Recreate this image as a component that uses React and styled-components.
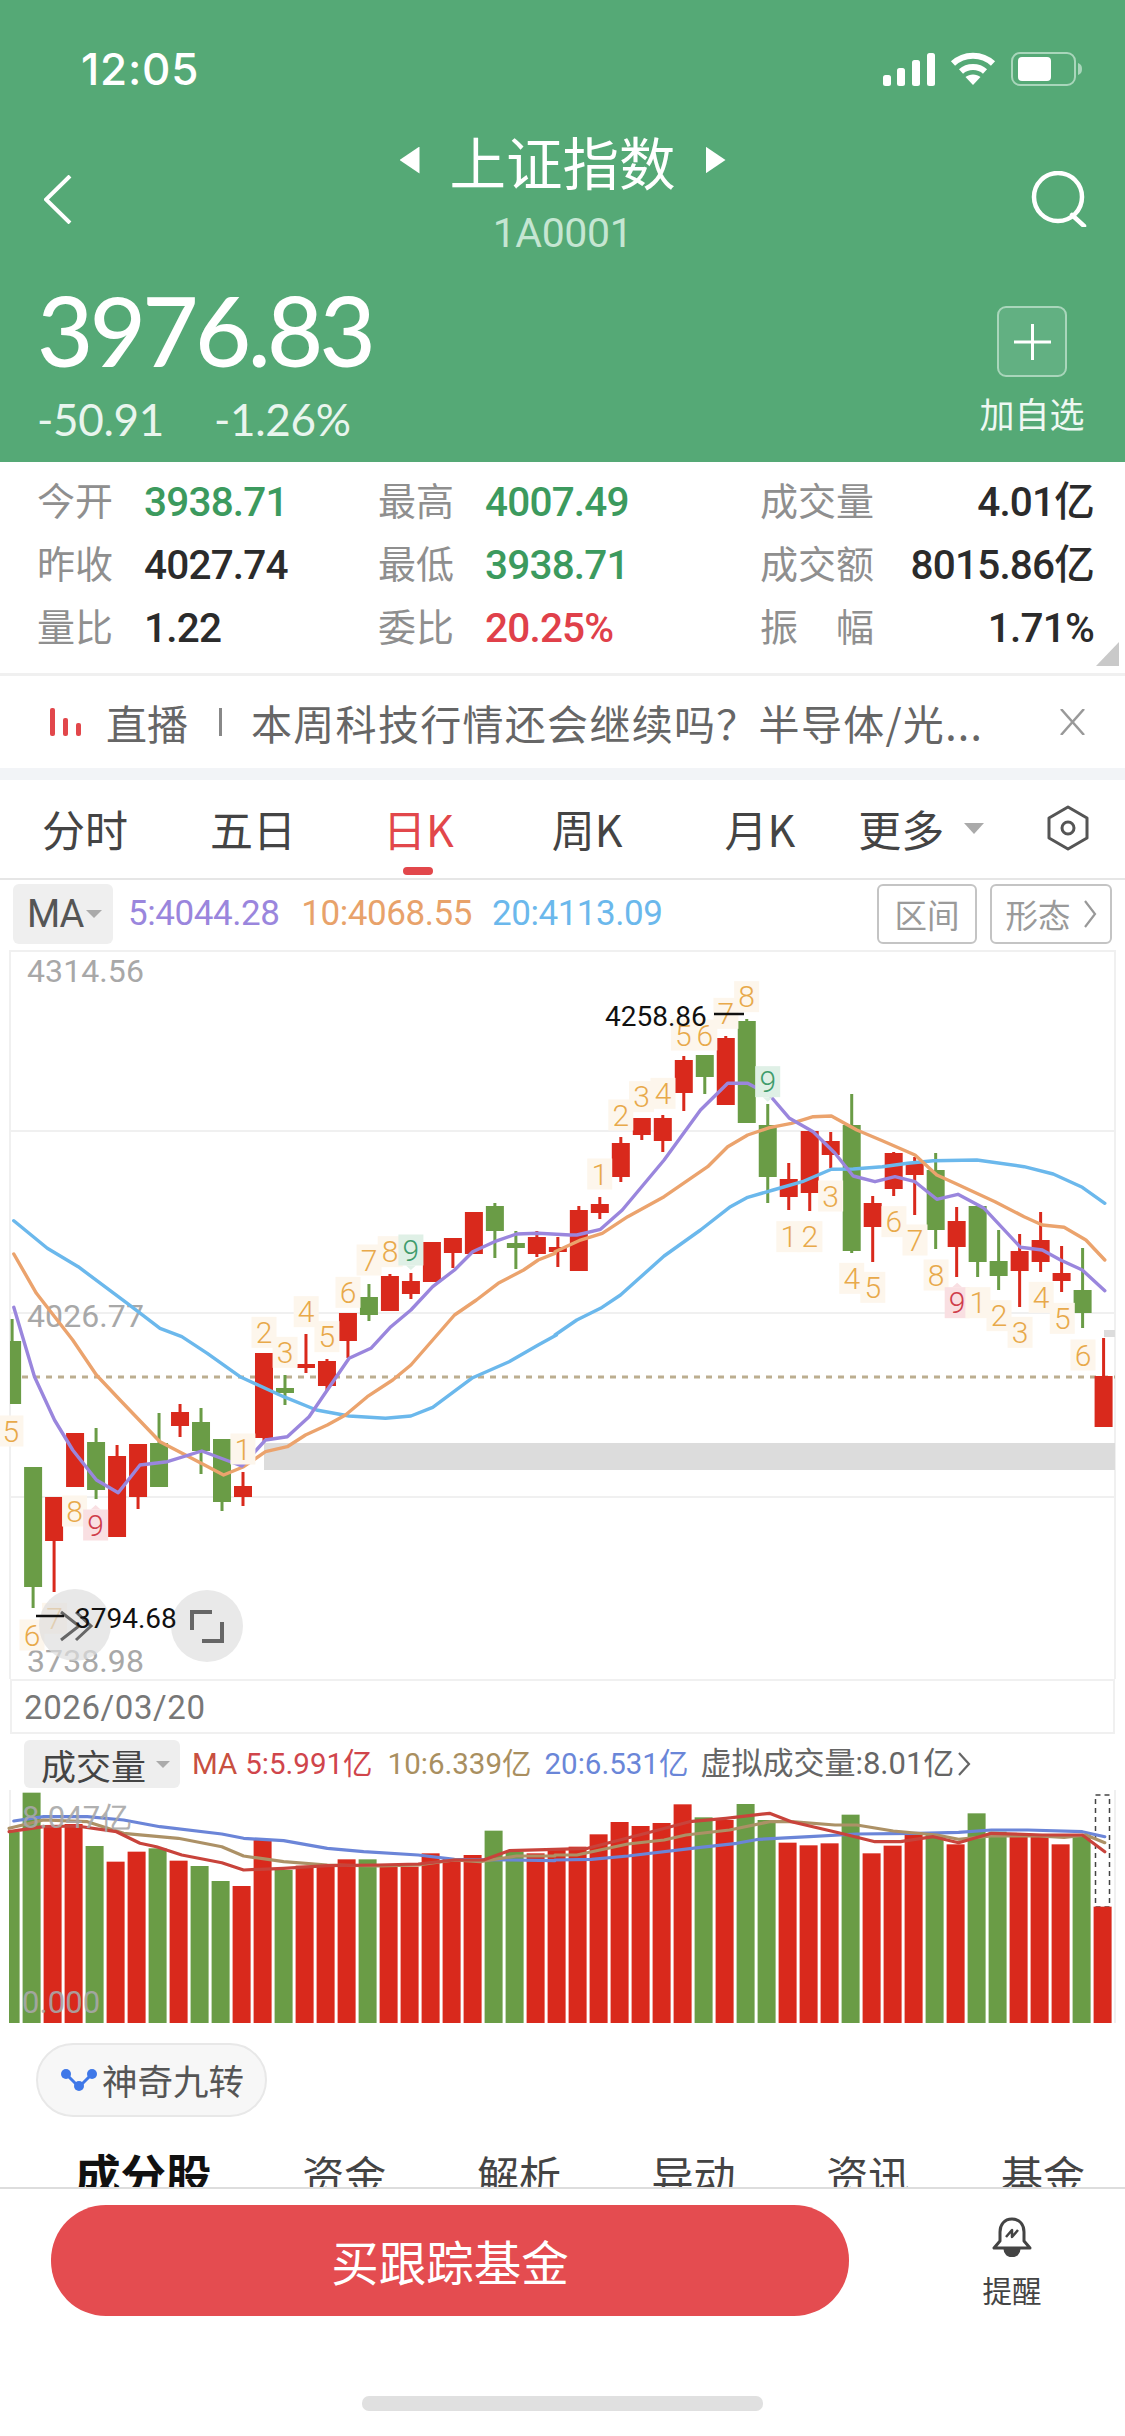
import React from "react";
import styled, { createGlobalStyle } from "styled-components";

const CJK = '"Noto Sans CJK SC", "Noto Sans", sans-serif';
const NUM = 'Roboto, "Noto Sans CJK SC", sans-serif';

const Global = createGlobalStyle`
  html, body { margin: 0; padding: 0; background: #fff; }
  #root { width: 1125px; }
  * { box-sizing: border-box; }
`;

const Page = styled.div`
  width: 1125px;
  height: 2436px;
  overflow: hidden;
  font-family: ${CJK};
  background: #fff;
  display: flex;
  flex-direction: column;
`;

/* header */
const Header = styled.header`
  height: 462px;
  flex: none;
  background: #55a976;
  color: #fff;
  padding-top: 47px;
`;
const StatusBar = styled.div`
  height: 44px;
  padding: 0 41px 0 81px;
  display: flex;
  align-items: center;
  justify-content: space-between;
`;
const StatusIcons = styled.div`
  display: flex;
  align-items: center;
  gap: 15px;
`;
const Clock = styled.span`
  font: 500 44px/44px Inter, sans-serif;
  letter-spacing: 0.8px;
`;
const NavRow = styled.div`
  margin-top: 37px;
  height: 142px;
  padding: 0 38px;
  display: grid;
  grid-template-columns: 1fr auto 1fr;
  align-items: center;
`;
const BackSlot = styled.div`
  display: flex;
  padding-left: 6px;
`;
const SearchSlot = styled.div`
  display: flex;
  justify-content: flex-end;
`;
const TitleBlock = styled.div`
  align-self: start;
  display: flex;
  flex-direction: column;
  align-items: center;
`;
const TitleLine = styled.div`
  display: flex;
  align-items: center;
  gap: 30px;
  height: 68px;
  margin-top: -2px;
`;
const Title = styled.h1`
  margin: 0;
  font: 400 56.5px/68px ${CJK};
`;
const Arrow = styled.i`
  display: block;
  width: 20px;
  height: 27px;
  background: #fff;
  clip-path: ${(p) => (p.$left ? "polygon(100% 0, 100% 100%, 0 50%)" : "polygon(0 0, 100% 50%, 0 100%)")};
`;
const Code = styled.div`
  margin-top: 14px;
  font: 400 41px/50px Roboto, sans-serif;
  color: #c5e6d2;
  letter-spacing: -0.4px;
`;
const PriceRow = styled.div`
  padding: 5px 40px 0 37px;
  display: flex;
  justify-content: space-between;
`;
const Price = styled.div`
  font: 500 97px/110px Lato, Roboto, sans-serif;
  letter-spacing: -3.6px;
`;
const Deltas = styled.div`
  margin-top: 12px;
  display: flex;
  gap: 50px;
  font: 400 44px/44px Lato, Roboto, sans-serif;
  letter-spacing: -0.3px;
  color: #e9f5ee;
`;
const Watch = styled.div`
  width: 106px;
  display: flex;
  flex-direction: column;
  align-items: center;
  padding-top: 31px;
`;
const AddBox = styled.div`
  width: 70px;
  height: 71px;
  border: 2px solid #a9d6bb;
  border-radius: 9px;
  background: #62b082;
  display: flex;
  align-items: center;
  justify-content: center;
`;
const WatchLabel = styled.div`
  margin-top: 14px;
  font: 400 35px/44px ${CJK};
  white-space: nowrap;
  color: #eef8f2;
`;

/* stats */
const Stats = styled.section`
  position: relative;
  height: 211px;
  flex: none;
  padding: 8px 31px 0 37px;
  display: grid;
  grid-template-columns: 341px 382px 1fr;
  grid-auto-rows: 63px;
`;
const Stat = styled.div`
  display: flex;
  align-items: center;
  justify-content: ${(p) => (p.$spread ? "space-between" : "flex-start")};
`;
const StatLabel = styled.span`
  width: ${(p) => (p.$wide ? "auto" : "107px")};
  padding-bottom: 5px;
  font: 400 38px/50px ${CJK};
  color: #8f8f8f;
  white-space: pre;
`;
const StatValue = styled.span`
  font: 500 40.5px/50px ${NUM};
  letter-spacing: -0.8px;
  color: ${(p) => p.$c || "#2b2b2b"};
  white-space: nowrap;
`;
const Corner = styled.i`
  position: absolute;
  right: 6px;
  bottom: 7px;
  width: 23px;
  height: 24px;
  background: #c9c9c9;
  clip-path: polygon(100% 0, 100% 100%, 0 100%);
`;

/* live */
const Live = styled.section`
  height: 95px;
  flex: none;
  border-top: 3px solid #f0f0f0;
  padding: 0 40px 0 50px;
  display: flex;
  align-items: center;
  font: 400 41px/50px ${CJK};
  color: #666;
`;
const LiveTag = styled.span`
  margin-left: 25px;
  width: 113px;
`;
const LiveBar = styled.i`
  display: block;
  width: 3px;
  height: 28px;
  margin-right: 29px;
  background: #888;
`;
const LiveText = styled.span`
  flex: 1;
  white-space: nowrap;
  letter-spacing: 1.3px;
`;
const Gap = styled.div`
  height: 12px;
  flex: none;
  background: #f2f4f7;
`;

/* period tabs */
const Periods = styled.nav`
  height: 100px;
  flex: none;
  border-bottom: 2px solid #e6e6e6;
  padding: 0 36px 2px 42px;
  display: flex;
  align-items: center;
`;
const Period = styled.span`
  position: relative;
  margin-left: ${(p) => p.$ml || 0}px;
  font: 400 43px/60px ${CJK};
  color: ${(p) => (p.$on ? "#e2474b" : "#444")};
  white-space: nowrap;
  &::after {
    content: ${(p) => (p.$on ? '""' : "none")};
    position: absolute;
    left: 20px;
    bottom: -17px;
    width: 30px;
    height: 8px;
    border-radius: 4px;
    background: #e2474b;
  }
`;
const Caret = styled.i`
  display: block;
  flex: none;
  margin-left: ${(p) => p.$ml}px;
  width: 0;
  height: 0;
  border-left: ${(p) => p.$s}px solid transparent;
  border-right: ${(p) => p.$s}px solid transparent;
  border-top: ${(p) => p.$s * 1.1}px solid #aaa;
`;
const Spacer = styled.div`
  flex: 1;
`;

/* indicator row */
const IndRow = styled.div`
  height: 70px;
  flex: none;
  padding: 4px 13px 6px 13px;
  display: flex;
  align-items: stretch;
`;
const MaBox = styled.div`
  width: 100px;
  background: #efefef;
  border-radius: 6px;
  padding-left: 14px;
  display: flex;
  align-items: center;
  font: 400 38px/1 ${NUM};
  color: #555;
  letter-spacing: -1px;
`;
const MaValue = styled.span`
  align-self: center;
  margin-left: ${(p) => p.$ml}px;
  font: 400 35px/50px ${NUM};
  letter-spacing: -0.45px;
  color: ${(p) => p.$c};
  white-space: nowrap;
`;
const Ghost = styled.div`
  width: ${(p) => p.$w}px;
  margin-left: ${(p) => p.$ml || 0}px;
  border: 2px solid #c4c4c4;
  border-radius: 6px;
  display: flex;
  align-items: center;
  justify-content: center;
  font: 400 32.5px/1 ${CJK};
  color: #9a9a9a;
`;

/* charts */
const ChartSvg = styled.svg`
  display: block;
  flex: none;
  width: 1125px;
`;
const AxisLabel = styled.text`
  font: 400 ${(p) => p.$s || 32}px Roboto, sans-serif;
  letter-spacing: 0.1px;
  fill: #a8a8a8;
`;
const Nine = styled.text`
  font: 300 30px Roboto, sans-serif;
  text-anchor: middle;
  dominant-baseline: central;
  fill: ${(p) => p.$c};
`;
const Extreme = styled.text`
  font: 400 28px Roboto, sans-serif;
  fill: #111;
`;
const DateRow = styled.div`
  height: 55px;
  flex: none;
  margin: 0 10px;
  padding: 2px 0 0 12px;
  border: 2px solid #f0f0f0;
  display: flex;
  align-items: center;
  font: 400 33px/1 Roboto, sans-serif;
  color: #777;
  letter-spacing: 0.6px;
`;
const VolHead = styled.div`
  height: 56px;
  flex: none;
  padding: 6px 0 2px 24px;
  display: flex;
  align-items: stretch;
`;
const VolBox = styled.div`
  width: 156px;
  border-radius: 6px;
  background: #eee;
  padding-left: 17px;
  display: flex;
  align-items: center;
  font: 400 35px/1 ${CJK};
  color: #444;
`;
const VolValue = styled.span`
  align-self: center;
  margin-left: ${(p) => p.$ml}px;
  font: 400 ${(p) => p.$s || 29.5}px/44px Roboto, "Noto Sans CJK SC", sans-serif;
  color: ${(p) => p.$c};
  white-space: nowrap;
`;
const VolMore = styled.span`
  display: flex;
  align-self: center;
  margin-left: 3px;
`;

/* bottom */
const ChipRow = styled.div`
  height: 87px;
  flex: none;
  padding: 13px 0 0 36px;
`;
const Chip = styled.div`
  width: 231px;
  height: 74px;
  border: 2px solid #e8e8e8;
  border-radius: 37px;
  background: #f7f7f7;
  padding-left: 23px;
  display: flex;
  align-items: center;
  gap: 5px;
  font: 400 35.5px/1 ${CJK};
  color: #555;
`;
const SubTabs = styled.nav`
  height: 70px;
  flex: none;
  overflow: hidden;
  padding: 29px 40px 0 75px;
  display: flex;
  align-items: flex-start;
  justify-content: space-between;
`;
const SubTab = styled.span`
  font: ${(p) => (p.$on ? "700 45.5px" : "400 42px")} / 56px ${CJK};
  color: ${(p) => (p.$on ? "#111" : "#444")};
  ${(p) => (p.$on ? "margin-top: -1px;" : "")}
`;
const Footer = styled.footer`
  flex: 1;
  border-top: 2px solid #ddd;
  background: #fff;
  display: flex;
  flex-direction: column;
`;
const FooterRow = styled.div`
  padding: 16px 0 0 51px;
  display: flex;
  align-items: flex-start;
`;
const BuyBtn = styled.button`
  width: 798px;
  height: 111px;
  border: 0;
  border-radius: 55px;
  background: #e44c50;
  color: #fff;
  font: 400 47.5px/1 ${CJK};
`;
const Remind = styled.div`
  margin-left: 117px;
  width: 92px;
  padding-top: 12px;
  display: flex;
  flex-direction: column;
  align-items: center;
`;
const RemindLabel = styled.span`
  margin-top: 11px;
  font: 400 29.5px/42px ${CJK};
  color: #444;
`;
const HomeBar = styled.div`
  width: 401px;
  height: 15px;
  margin: 80px auto 0;
  border-radius: 7px;
  background: #e0e0e0;
`;

/* chart data */
const RED = "#d9291c";
const GREEN = "#6a9c46";
const cx = (i) => 33.1 + (i - 1) * 20.99;
const C = [
  ["g",1319,1341,1404,1404],["g",1467,1467,1587,1608],["r",1497,1497,1541,1592],["r",1433,1433,1487,1487],
  ["g",1428,1442,1490,1499],["r",1445,1456,1537,1537],["r",1444,1444,1497,1509],["g",1413,1443,1487,1487],
  ["r",1404,1412,1426,1437],["g",1408,1422,1451,1474],["g",1439,1439,1502,1511],["r",1472,1486,1497,1506],
  ["r",1353,1353,1438,1442],["g",1375,1388,1393,1405],["r",1334,1364,1368,1373],["r",1359,1361,1386,1391],
  ["r",1313,1313,1341,1358],["g",1284,1297,1315,1321],["r",1274,1276,1311,1311],["r",1273,1281,1294,1299],
  ["r",1242,1242,1282,1282],["r",1238,1238,1253,1268],["r",1212,1212,1254,1254],["g",1203,1206,1231,1258],
  ["g",1231,1243,1248,1269],["r",1231,1237,1254,1257],["r",1237,1247,1252,1267],["r",1206,1210,1271,1271],
  ["r",1197,1204,1213,1219],["r",1137,1143,1177,1182],["r",1118,1118,1135,1140],["r",1115,1118,1141,1152],
  ["r",1056,1060,1093,1111],["g",1055,1055,1077,1094],["r",1036,1038,1105,1105],["g",1019,1021,1123,1123],
  ["g",1104,1125,1177,1203],["r",1163,1179,1197,1210],["r",1131,1131,1193,1211],["r",1132,1141,1155,1168],
  ["g",1094,1125,1251,1253],["r",1196,1203,1227,1262],["r",1152,1153,1189,1196],["r",1157,1163,1175,1215],
  ["g",1153,1170,1230,1249],["r",1207,1221,1247,1277],["g",1206,1206,1262,1277],["g",1230,1261,1276,1290],
  ["r",1234,1251,1271,1307],["r",1212,1240,1262,1272],["r",1246,1273,1281,1292],["g",1248,1290,1313,1328],
  ["r",1338,1376,1427,1427],
];
const toPts = (arr, fx, fy) => {
  const out = [];
  for (let i = 0; i < arr.length; i += 2) out.push(`${fx(arr[i]).toFixed(1)},${fy(arr[i + 1]).toFixed(1)}`);
  return out.join(" ");
};
const x3 = (v) => v / 2.75;
const x4 = (v) => 555 + v / 2.75;
const y3 = (v) => 950 + v / 3;
const MA5 = toPts([38,1072,95,1280,150,1410,200,1500,265,1590,325,1628,385,1545,460,1535,555,1503,665,1548,730,1470,790,1460,850,1400,900,1320,960,1225,1020,1195,1075,1130,1130,1080,1190,1010,1250,960,1300,905,1360,875,1420,852,1480,850,1568,855], x3, y3)
  + " " + toPts([60,855,125,838,185,780,300,630,400,480,475,400,530,400,590,435,645,505,710,545,770,610,820,678,880,695,935,680,990,695,1050,748,1108,733,1180,775,1280,892,1340,900,1390,930,1450,960,1512,1022], x4, y3);
const MA10 = toPts([38,912,100,1030,200,1170,265,1275,330,1350,440,1475,510,1515,615,1575,670,1550,730,1505,790,1490,840,1455,900,1425,950,1395,1010,1340,1080,1290,1130,1245,1190,1170,1250,1095,1310,1050,1370,1000,1440,960,1480,930,1526,910], x3, y3)
  + " " + toPts([0,905,70,870,130,850,200,800,300,740,420,650,475,590,530,555,590,533,650,520,710,500,760,498,830,540,900,572,990,615,1050,675,1100,700,1210,755,1290,800,1340,825,1400,832,1460,870,1512,930], x4, y3);
const MA20 = toPts([38,812,130,895,215,950,350,1060,440,1135,500,1160,570,1210,660,1280,780,1340,870,1380,960,1398,1060,1405,1130,1398,1190,1372,1300,1283,1400,1235,1480,1185,1530,1155], x3, y3)
  + " " + toPts([0,1155,60,1110,125,1075,180,1035,300,918,400,840,480,772,530,742,600,720,680,695,760,658,820,657,900,650,970,640,1040,632,1160,630,1290,650,1370,672,1450,712,1512,760], x4, y3);

const ORANGE = "#e8a94a";
const NINES = [
  [30,1443,"5",0,"o"],[668,1497,"1",0,"o"],[726,1147,"2",0,"o"],[784,1207,"3",0,"o"],[842,1085,"4",0,"o"],
  [899,1160,"5",0,"o"],[957,1027,"6",0,"o"],[1015,930,"7",0,"o"],[1073,905,"8",0,"o"],[1130,900,"9",0,"g"],
  [205,1683,"8",0,"o"],[263,1725,"9",0,"p"],[150,2005,"7",0,"o"],[88,2055,"6",0,"o"],
  [123,672,"1",1,"o"],[181,495,"2",1,"o"],[238,440,"3",1,"o"],[297,430,"4",1,"o"],[353,255,"5",1,"o"],[412,255,"6",1,"o"],
  [470,190,"7",1,"o"],[527,140,"8",1,"o"],[585,395,"9",1,"g"],[643,860,"1",1,"o"],[701,860,"2",1,"o"],[758,738,"3",1,"o"],
  [816,985,"4",1,"o"],[874,1012,"5",1,"o"],[932,815,"6",1,"o"],[990,870,"7",1,"o"],[1048,975,"8",1,"o"],[1106,1058,"9",1,"p"],
  [1163,1058,"1",1,"o"],[1221,1097,"2",1,"o"],[1279,1147,"3",1,"o"],[1337,1042,"4",1,"o"],[1395,1105,"5",1,"o"],[1452,1215,"6",1,"o"],
];
const NINE_STYLE = {
  o: { bg: "#fdf6ec", fg: ORANGE },
  g: { bg: "#dff0e6", fg: "#3f9c6c" },
  p: { bg: "#f9dfe2", fg: "#cf3d4b" },
};

const VT = [
  ["g",335],["g",218],["r",318],["r",312],["g",378],["r",425],["r",395],["g",385],["r",422],["g",438],["g",483],["r",498],
  ["r",358],["g",450],["r",437],["r",437],["r",418],["g",418],["r",440],["r",440],["r",400],["r",415],["r",405],["g",332],
  ["g",395],["r",400],["r",388],["r",380],["r",343],["r",306],["r",318],["r",309],["r",253],["g",292],["r",300],["g",252],
  ["g",300],["r",368],["r",376],["r",370],["g",284],["r",400],["r",377],["r",345],["g",345],["r",373],["g",280],["g",335],
  ["r",345],["r",345],["r",373],["g",345],["r",560],
];
const vy = (v) => 1720 + v / 3;
const VBLUE = toPts([38,303,120,290,240,290,340,300,440,320,610,342,670,355,780,362,900,385,1000,395,1150,405,1250,418,1400,420,1526,422], x3, vy)
  + " " + toPts([0,420,100,418,200,408,400,382,500,370,560,358,700,350,830,342,1000,340,1110,337,1200,330,1300,330,1450,335,1512,350], x4, vy);
const VBROWN = toPts([25,325,120,300,240,305,340,340,490,355,610,380,670,408,780,425,900,435,1040,438,1150,435,1250,420,1320,425,1420,408,1526,408], x3, vy)
  + " " + toPts([0,405,60,405,200,372,300,360,360,345,480,330,590,305,650,305,770,315,830,315,930,333,1050,345,1110,358,1200,348,1330,348,1400,352,1460,345,1512,368], x4, vy);
const VRED = toPts([25,335,120,320,210,318,320,335,385,370,430,380,500,405,610,428,670,450,780,445,900,437,1040,435,1150,432,1250,420,1330,420,1400,392,1526,388], x3, vy)
  + " " + toPts([0,388,90,385,250,340,370,305,470,295,590,280,650,305,780,338,880,365,950,365,1040,350,1110,368,1200,340,1340,345,1450,345,1512,395], x4, vy);

function MainChart() {
  return (
    <ChartSvg viewBox="0 950 1125 729" height="729">
      <g stroke="#f0f0f0" strokeWidth="2">
        {[951, 1131, 1313, 1497].map((y) => <line key={y} x1="10" x2="1115" y1={y} y2={y} />)}
        <line x1="10" x2="10" y1="950" y2="1679" />
        <line x1="1115" x2="1115" y1="950" y2="1679" />
      </g>
      <rect x="264" y="1443" width="851" height="27" fill="#dcdcdc" />
      <rect x="1104" y="1330" width="11" height="7" fill="#dcdcdc" />
      <line x1="10" x2="1115" y1="1377" y2="1377" stroke="#bcae90" strokeWidth="3" strokeDasharray="6 6" />
      <AxisLabel x="27" y="982">4314.56</AxisLabel>
      <AxisLabel x="27" y="1327">4026.77</AxisLabel>
      <AxisLabel x="27" y="1672">3738.98</AxisLabel>
      {C.map(([c, wt, bt, bb, wb], i) => {
        const col = c === "r" ? RED : GREEN;
        const x = cx(i);
        const left = Math.max(10, x - 9);
        return (
          <g key={i} fill={col}>
            {wb > wt && <rect x={Math.max(10, x - 1.5)} y={wt} width="3" height={wb - wt} />}
            <rect x={left} y={bt} width={x + 9 - left} height={bb - bt} />
          </g>
        );
      })}
      <g fill="none" strokeWidth="3.4" strokeLinejoin="round" strokeLinecap="round">
        <polyline points={MA20} stroke="#6bb8ec" />
        <polyline points={MA10} stroke="#eba36d" />
        <polyline points={MA5} stroke="#9a86dd" />
      </g>
      {NINES.map(([zx, zy, t, z4, k], i) => {
        const x = z4 ? x4(zx) : x3(zx);
        const y = y3(zy);
        const s = NINE_STYLE[k];
        return (
          <g key={i}>
            <rect x={x - 12.5} y={y - 15.5} width="25" height="31" fill={s.bg} />
            {k === "g" && <polygon points={`${x - 5},${y + 15.5} ${x + 5},${y + 15.5} ${x},${y + 20}`} fill={s.bg} />}
            {k === "p" && <polygon points={`${x - 5},${y - 15.5} ${x + 5},${y - 15.5} ${x},${y - 20}`} fill={s.bg} />}
            <Nine x={x} y={y} $c={s.fg}>{t}</Nine>
          </g>
        );
      })}
      <circle cx="75" cy="1625" r="36" fill="#dedede" fillOpacity="0.7" />
      <circle cx="207" cy="1626" r="36" fill="#e9e9e9" />
      <g fill="none" stroke="#666" strokeWidth="3">
        <polyline points="61,1612 79,1626 61,1640" />
        <polyline points="76,1612 91,1626 76,1640" />
        <polyline points="212,1612 192,1612 192,1630" strokeWidth="4" />
        <polyline points="222,1622 222,1641 202,1641" strokeWidth="4" />
      </g>
      <line x1="714" x2="744" y1="1014" y2="1014" stroke="#111" strokeWidth="2.5" />
      <Extreme x="605" y="1026">4258.86</Extreme>
      <line x1="36" x2="64" y1="1616" y2="1616" stroke="#111" strokeWidth="2.5" />
      <Extreme x="75" y="1628">3794.68</Extreme>
    </ChartSvg>
  );
}

function VolumeChart() {
  return (
    <ChartSvg viewBox="0 1790 1125 240" height="240">
      <line x1="1115" x2="1115" y1="1790" y2="2023" stroke="#f0f0f0" strokeWidth="2" />
      <line x1="10" x2="10" y1="1790" y2="2023" stroke="#f0f0f0" strokeWidth="2" />
      <rect x="1095.5" y="1795" width="14" height="112" fill="none" stroke="#444" strokeWidth="1.5" strokeDasharray="5 4" />
      {VT.map(([c, t], i) => {
        const x = 31.6 + (i - 1) * 21;
        const left = Math.max(9, x - 9);
        return <rect key={i} x={left} y={vy(t)} width={x + 9 - left} height={2023 - vy(t)} fill={c === "r" ? RED : GREEN} />;
      })}
      <g fill="none" strokeWidth="3.2" strokeLinejoin="round" strokeLinecap="round">
        <polyline points={VBLUE} stroke="#6b85d8" />
        <polyline points={VBROWN} stroke="#ac9166" />
        <polyline points={VRED} stroke="#c8433b" />
      </g>
      <AxisLabel x="22" y="1828" $s="31" opacity="0.9">8.047亿</AxisLabel>
      <AxisLabel x="22" y="2013" $s="31" opacity="0.9">0.000</AxisLabel>
    </ChartSvg>
  );
}

const Signal = () => (
  <svg width="52" height="33" viewBox="0 0 52 33" fill="#fff">
    <rect x="0" y="22" width="8" height="11" rx="2.5" />
    <rect x="14" y="15" width="8" height="18" rx="2.5" />
    <rect x="29" y="7" width="8" height="26" rx="2.5" />
    <rect x="44" y="0" width="8" height="33" rx="2.5" />
  </svg>
);
const Wifi = () => (
  <svg width="46" height="34" viewBox="0 0 46 34" fill="none" stroke="#fff" strokeWidth="6">
    <path d="M3 11.5C14 1 32 1 43 11.5" />
    <path d="M11 19.5C17.5 13.5 28.5 13.5 35 19.5" />
    <path d="M23 33l-7.5-8c4-3.5 11-3.5 15 0z" fill="#fff" stroke="none" />
  </svg>
);
const Battery = () => (
  <svg width="73" height="34" viewBox="0 0 73 34">
    <rect x="1" y="1" width="63" height="32" rx="8" fill="none" stroke="#a9d6bb" strokeWidth="2" />
    <rect x="7" y="5" width="33" height="24" rx="4" fill="#fff" />
    <path d="M67 11c3 1 4 3 4 6s-1 5-4 6z" fill="#a9d6bb" />
  </svg>
);
const Back = () => (
  <svg width="28" height="49" viewBox="0 0 28 49" fill="none" stroke="#fff" strokeWidth="4">
    <polyline points="26,1 2,24.5 26,48" />
  </svg>
);
const Search = () => (
  <svg width="56" height="56" viewBox="0 0 56 56" fill="none" stroke="#fff" strokeWidth="4.5">
    <circle cx="27" cy="26" r="24" />
    <line x1="41" y1="44" x2="53" y2="55" strokeLinecap="round" />
  </svg>
);
const Plus = () => (
  <svg width="37" height="36" viewBox="0 0 37 36" stroke="#fff" strokeWidth="3">
    <line x1="18.5" y1="0" x2="18.5" y2="36" />
    <line x1="0" y1="18" x2="37" y2="18" />
  </svg>
);
const LiveIcon = () => (
  <svg width="31" height="28" viewBox="0 0 31 28" fill="#e2474b">
    <rect x="0" y="0" width="5" height="28" rx="2" />
    <rect x="13" y="10" width="5" height="18" rx="2" />
    <rect x="26" y="15" width="5" height="13" rx="2" />
  </svg>
);
const Close = () => (
  <svg width="25" height="26" viewBox="0 0 25 26" stroke="#999" strokeWidth="2.5">
    <line x1="1" y1="0" x2="24" y2="26" />
    <line x1="24" y1="0" x2="1" y2="26" />
  </svg>
);
const Hex = () => (
  <svg width="42" height="46" viewBox="0 0 42 46" fill="none" stroke="#555" strokeWidth="3" strokeLinejoin="round">
    <path d="M21 2L40 13V33L21 44L2 33V13Z" />
    <circle cx="21" cy="23" r="6" />
  </svg>
);
const GhostChevron = styled.svg`
  margin-left: 12px;
`;
const Chevron = () => (
  <GhostChevron width="14" height="30" viewBox="0 0 14 30" fill="none" stroke="#999" strokeWidth="2.2">
    <polyline points="2,2 12,15 2,28" />
  </GhostChevron>
);
const ChevSmall = () => (
  <svg width="14" height="26" viewBox="0 0 14 26" fill="none" stroke="#666" strokeWidth="2.2">
    <polyline points="2,2 12,13 2,24" />
  </svg>
);
const Nodes = () => (
  <svg width="36" height="22" viewBox="0 0 36 22" fill="#3f78e8">
    <path d="M4 4L18 18L32 4" fill="none" stroke="#3f78e8" strokeWidth="3" />
    <circle cx="5" cy="5" r="5" />
    <circle cx="31" cy="5" r="5" />
    <circle cx="18" cy="17" r="5" />
  </svg>
);
const Bell = () => (
  <svg width="40" height="40" viewBox="0 0 40 40" fill="none" stroke="#444" strokeWidth="3" strokeLinejoin="round">
    <path d="M20 2C12 2 8 8 8 15V24L2 31H38L32 24V15C32 8 28 2 20 2Z" />
    <path d="M13 32C13 41 27 41 27 32" fill="#444" />
    <path d="M14 20L20 13V20L26 13" strokeWidth="2.5" />
  </svg>
);

const GRN = "#3c9a5e";
const STATS = [
  ["今开", "3938.71", GRN], ["最高", "4007.49", GRN], ["成交量", "4.01亿"],
  ["昨收", "4027.74"], ["最低", "3938.71", GRN], ["成交额", "8015.86亿"],
  ["量比", "1.22"], ["委比", "20.25%", "#e0404a"], ["振　幅", "1.71%"],
];

export default function App() {
  return (
    <Page>
      <Global />
      <Header>
        <StatusBar>
          <Clock>12:05</Clock>
          <StatusIcons>
            <Signal />
            <Wifi />
            <Battery />
          </StatusIcons>
        </StatusBar>
        <NavRow>
          <BackSlot><Back /></BackSlot>
          <TitleBlock>
            <TitleLine>
              <Arrow $left />
              <Title>上证指数</Title>
              <Arrow />
            </TitleLine>
            <Code>1A0001</Code>
          </TitleBlock>
          <SearchSlot><Search /></SearchSlot>
        </NavRow>
        <PriceRow>
          <div>
            <Price>3976.83</Price>
            <Deltas>
              <span>-50.91</span>
              <span>-1.26%</span>
            </Deltas>
          </div>
          <Watch>
            <AddBox><Plus /></AddBox>
            <WatchLabel>加自选</WatchLabel>
          </Watch>
        </PriceRow>
      </Header>

      <Stats>
        {STATS.map(([l, v, c], i) => (
          <Stat key={l} $spread={i % 3 === 2}>
            <StatLabel $wide={i % 3 === 2}>{l}</StatLabel>
            <StatValue $c={c}>{v}</StatValue>
          </Stat>
        ))}
        <Corner />
      </Stats>

      <Live>
        <LiveIcon />
        <LiveTag>直播</LiveTag>
        <LiveBar />
        <LiveText>本周科技行情还会继续吗？半导体/光...</LiveText>
        <Close />
      </Live>
      <Gap />

      <Periods>
        <Period>分时</Period>
        <Period $ml={82}>五日</Period>
        <Period $ml={87} $on>日K</Period>
        <Period $ml={98}>周K</Period>
        <Period $ml={102}>月K</Period>
        <Period $ml={63}>更多</Period>
        <Caret $ml={20} $s={10} />
        <Spacer />
        <Hex />
      </Periods>

      <IndRow>
        <MaBox>MA<Caret $ml={3} $s={8} /></MaBox>
        <MaValue $ml={15} $c="#9a86dd">5:4044.28</MaValue>
        <MaValue $ml={22} $c="#e8a26a">10:4068.55</MaValue>
        <MaValue $ml={20} $c="#6bb8ec">20:4113.09</MaValue>
        <Spacer />
        <Ghost $w={100}>区间</Ghost>
        <Ghost $w={122} $ml={13}>形态<Chevron /></Ghost>
      </IndRow>

      <MainChart />
      <DateRow>2026/03/20</DateRow>

      <VolHead>
        <VolBox>成交量<Caret $ml={10} $s={7} /></VolBox>
        <VolValue $ml={12} $c="#c8503f">MA</VolValue>
        <VolValue $ml={8} $c="#d0454b">5:5.991亿</VolValue>
        <VolValue $ml={15} $c="#a98f60">10:6.339亿</VolValue>
        <VolValue $ml={13} $c="#6a86d8">20:6.531亿</VolValue>
        <VolValue $ml={12} $s={31} $c="#666">虚拟成交量:8.01亿</VolValue>
        <VolMore><ChevSmall /></VolMore>
      </VolHead>
      <VolumeChart />

      <ChipRow>
        <Chip><Nodes />神奇九转</Chip>
      </ChipRow>
      <SubTabs>
        <SubTab $on>成分股</SubTab>
        <SubTab>资金</SubTab>
        <SubTab>解析</SubTab>
        <SubTab>异动</SubTab>
        <SubTab>资讯</SubTab>
        <SubTab>基金</SubTab>
      </SubTabs>

      <Footer>
        <FooterRow>
          <BuyBtn>买跟踪基金</BuyBtn>
          <Remind>
            <Bell />
            <RemindLabel>提醒</RemindLabel>
          </Remind>
        </FooterRow>
        <HomeBar />
      </Footer>
    </Page>
  );
}
